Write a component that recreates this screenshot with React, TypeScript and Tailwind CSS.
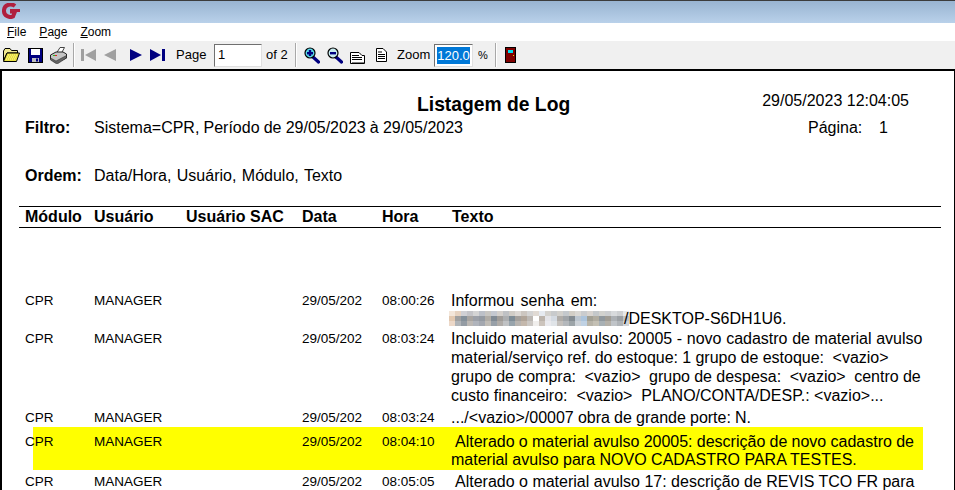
import React from 'react';

const FONT = "font-['Liberation_Sans',Arial,sans-serif]";

// pixelated block that hides the address in the original report
const mosaic = [
  ['#f3e6da', '#e6d2c0', '#d0d0d4', '#c4c4c8', '#d4d4d4', '#bcc0c8', '#c8c6c2', '#c4c8d0', '#d4d0cc', '#bfc1c4', '#d0ccc6', '#dcd8d4', '#ccc6c0', '#d4d4d4', '#e0dad4', '#e6eaf0', '#d4d2ce', '#c8cacc', '#d2d0cc', '#c4c8cc', '#d2cec6', '#dad8d4', '#cacccE', '#d8d4d0', '#c4c8ca', '#d2d2ce', '#cccED0', '#d8dadc', '#ced0d2', '#e6e8ea'],
  ['#e2c8b0', '#a0a0a0', '#84909a', '#a8a4a0', '#9ca0a8', '#949aa2', '#b0aca6', '#808a94', '#a09c98', '#acaeb0', '#7e8c96', '#a4a09c', '#b0a498', '#bcb8b4', '#ffffff', '#bcb4ac', '#e4e4e8', '#d4dae2', '#b0aca8', '#a0a4a8', '#848c92', '#bcc6d0', '#acc4dc', '#a2a094', '#b0aca0', '#90989e', '#a09c94', '#acb0b4', '#9ca0a4', '#c0c4c8'],
  ['#ecd8c8', '#b0b4b8', '#949ca4', '#bcb8b4', '#b0b4bc', '#a4a8b0', '#c0bcb6', '#98a0a8', '#b0aca8', '#c0c2c4', '#98a4ac', '#b8b4b0', '#c4b8ac', '#ccc8c4', '#f0eeec', '#ccc4bc', '#eaeaee', '#e0e4e8', '#c4c0bc', '#b4b8bc', '#9ca4a8', '#ccd2d8', '#c0d2e4', '#b8b4a8', '#c4c0b4', '#a8b0b4', '#b4b0a8', '#c0c4c8', '#b0b4b8', '#d0d4d8'],
];

const FolderIcon = () => (
  <svg width="17" height="14" viewBox="0 0 17 14">
    <path d="M0.500 3 L2 0.500 H7 L8.500 2.500 H14.500 V5 H4 L0.500 12.500 Z" fill="#f0e890" stroke="#000" />
    <path d="M0.500 13.500 L4 5 H16.500 L13.500 13.500 Z" fill="#e8e040" stroke="#000" />
    <path d="M5 7 H14 M4 9 H13 M3 11 H12" stroke="#fff8a0" strokeDasharray="1 1" />
  </svg>
);

const SaveIcon = () => (
  <svg width="15" height="15" viewBox="0 0 15 15">
    <rect x="0.500" y="0.500" width="14" height="14" fill="#000080" stroke="#000" />
    <rect x="3" y="1" width="9" height="6" fill="#fff" />
    <rect x="4" y="10" width="7" height="4" fill="#c0c0c0" />
    <rect x="8" y="10.500" width="2" height="3" fill="#000080" />
  </svg>
);

const PrintIcon = () => (
  <svg width="17" height="17" viewBox="0 0 17 17">
    <path d="M6 7 L10 0.500 H14.500 L11 7 Z" fill="#fff" stroke="#444" />
    <path d="M0.500 8 L6 5 H13 L16.500 7 V11 L8 15 H5 L0.500 12 Z" fill="#c4c4c4" stroke="#222" />
    <path d="M0.500 11 L6 14 L16.500 8.500 V11 L8 16.500 H6 L0.500 13 Z" fill="#666" stroke="#222" strokeWidth="0.500" />
    <rect x="3" y="8" width="2" height="1" fill="#20c020" />
    <rect x="5" y="8" width="2" height="1" fill="#e02020" />
  </svg>
);

const FirstIcon = ({ color }: { color: string }) => (
  <svg width="15" height="12" viewBox="0 0 15 12">
    <rect x="0" y="0" width="3" height="12" fill={color} />
    <path d="M15 0 V12 L4 6 Z" fill={color} />
  </svg>
);

const PrevIcon = ({ color }: { color: string }) => (
  <svg width="12" height="12" viewBox="0 0 12 12">
    <path d="M12 0 V12 L0 6 Z" fill={color} />
  </svg>
);

const NextIcon = ({ color }: { color: string }) => (
  <svg width="12" height="12" viewBox="0 0 12 12">
    <path d="M0 0 V12 L12 6 Z" fill={color} />
  </svg>
);

const LastIcon = ({ color }: { color: string }) => (
  <svg width="15" height="12" viewBox="0 0 15 12">
    <path d="M0 0 V12 L11 6 Z" fill={color} />
    <rect x="12" y="0" width="3" height="12" fill={color} />
  </svg>
);

const ZoomIcon = ({ plus }: { plus: boolean }) => (
  <svg width="16" height="17" viewBox="0 0 16 17">
    <path d="M9 10 L14.500 15" stroke="#000080" strokeWidth="3.200" strokeLinecap="round" />
    <circle cx="6" cy="6" r="5" fill={plus ? '#58d8e8' : '#c8ecf0'} stroke="#000" strokeWidth="1.200" />
    <rect x="3" y="5" width="6" height="2.400" fill="#000080" />
    {plus && <rect x="4.800" y="3" width="2.400" height="6" fill="#000080" />}
  </svg>
);

const TwoPageIcon = () => (
  <svg width="15" height="13" viewBox="0 0 15 13">
    <path d="M0.500 1.500 H9 L12 4.500 H14.500 V12.500 H0.500 Z" fill="#fff" stroke="#000" />
    <path d="M2 4.500 H9 M2 6.500 H12 M2 8.500 H12 M2 12 H14" stroke="#000" />
  </svg>
);

const PageIcon = () => (
  <svg width="11" height="14" viewBox="0 0 11 14">
    <path d="M0.500 0.500 H7 L10.500 4 V13.500 H0.500 Z" fill="#fff" stroke="#000" />
    <path d="M2 4 H6 M2 6.500 H9 M2 8.500 H9 M2 10.500 H9" stroke="#000" />
  </svg>
);

const DoorIcon = () => (
  <svg width="11" height="16" viewBox="0 0 11 16">
    <rect x="0.500" y="0.500" width="10" height="15" fill="#800000" stroke="#000" />
    <rect x="3" y="3" width="5" height="3" fill="#00e0f0" />
    <rect x="8" y="8" width="1" height="1" fill="#e8e000" />
  </svg>
);

const Logo = () => (
  <svg width="18" height="16" viewBox="0 0 18 16">
    <path d="M13 3 C9 0 2.500 1.500 2 7 C1.500 13 7.500 15 11 13.500 L13 8.500 H8" fill="none" stroke="#b0203e" strokeWidth="4" />
    <path d="M8 7.500 H18" stroke="#b0203e" strokeWidth="3" />
  </svg>
);

const Sep = () => <div className="w-0.5 h-[24px] bg-[#a8a8a8] border-r border-white" />;

const Row = ({ date, time, lines, highlight }: { date: string; time: string; lines: React.ReactNode; highlight?: boolean }) => (
  <div className="relative flex text-[13.500px] leading-[19px] text-black">
    {highlight && <div className="absolute left-[33px] right-[31px] top-[-5px] h-[43px] bg-[#ffff00]" />}
    <div className="relative ml-[25px] w-[69px]">CPR</div>
    <div className="relative w-[208px]">MANAGER</div>
    <div className="relative w-[80px]">{date}</div>
    <div className="relative w-[69px]">{time}</div>
    <div className="relative flex-1 text-[16px]">{lines}</div>
  </div>
);

export default function App() {
  return (
    <div className={`${FONT} w-[955px] h-[490px] overflow-hidden flex flex-col bg-white`}>
      <div className="h-[23px] border-t border-[#3c3c3c] bg-gradient-to-b from-[#99b4d1] to-[#b9d1ea] pl-[2px] pt-[2px]">
        <Logo />
      </div>
      <div className="h-[18px] flex items-center gap-[13px] pl-[7px] text-[12px] text-black">
        <span><u>F</u>ile</span>
        <span><u>P</u>age</span>
        <span><u>Z</u>oom</span>
      </div>
      <div className="h-[28px] bg-[#f0f0f0] flex items-center pl-[3px] text-[13px] text-black">
        <FolderIcon />
        <div className="ml-[8px]"><SaveIcon /></div>
        <div className="ml-[7px]"><PrintIcon /></div>
        <div className="ml-[6px]"><Sep /></div>
        <div className="ml-[6px]"><FirstIcon color="#a0a0a0" /></div>
        <div className="ml-[8px]"><PrevIcon color="#a0a0a0" /></div>
        <div className="ml-[14px]"><NextIcon color="#000080" /></div>
        <div className="ml-[8px]"><LastIcon color="#000080" /></div>
        <span className="ml-[11px] w-[29px]">Page</span>
        <div className="ml-[9px] w-[48px] h-[23px] bg-white border border-[#707070] border-r-[#e0e0e0] border-b-[#e0e0e0] pl-[3px] leading-[20px] text-[13px]">1</div>
        <span className="ml-[4px] w-[22px]">of 2</span>
        <div className="ml-[7px]"><Sep /></div>
        <div className="ml-[7px]"><ZoomIcon plus /></div>
        <div className="ml-[7px]"><ZoomIcon plus={false} /></div>
        <div className="ml-[7px] mt-[4px]"><TwoPageIcon /></div>
        <div className="ml-[11px]"><PageIcon /></div>
        <span className="ml-[10px] w-[32px]">Zoom</span>
        <div className="ml-[5px] w-[39px] h-[23px] bg-white border border-[#707070] border-r-[#e0e0e0] border-b-[#e0e0e0] p-[2px]">
          <div className="w-[33px] h-[17px] bg-[#0078d7] text-white leading-[17px] text-center">120.0</div>
        </div>
        <span className="ml-[5px] w-[10px] text-[11px]">%</span>
        <div className="ml-[7px]"><Sep /></div>
        <div className="ml-[8px]"><DoorIcon /></div>
      </div>
      <div className="flex-1 border-t-2 border-l-2 border-r border-black overflow-hidden">
        <div className="flex h-[47px]">
          <div className="w-[415px]" />
          <div className="pt-[23px] text-[19.300px] leading-[22px] font-bold text-black">Listagem de Log</div>
          <div className="ml-[192px] pt-[20px] text-[16px] leading-[19px] text-black">29/05/2023 12:04:05</div>
        </div>
        <div className="flex text-[16px] leading-[19px] text-black">
          <div className="ml-[23px] w-[69px] font-bold">Filtro:</div>
          <div className="w-[714px] [word-spacing:-0.3px]">Sistema=CPR, Período de 29/05/2023 à 29/05/2023</div>
          <div className="w-[71px]">Página:</div>
          <div>1</div>
        </div>
        <div className="flex mt-[29px] text-[16px] leading-[19px] text-black">
          <div className="ml-[23px] w-[69px] font-bold">Ordem:</div>
          <div className="[word-spacing:1px]">Data/Hora, Usuário, Módulo, Texto</div>
        </div>
        <div className="mt-[21px] ml-[17px] mr-[13px] h-[22px] border-t border-b border-black flex items-center text-[16px] font-bold text-black">
          <div className="ml-[6px] w-[69px]">Módulo</div>
          <div className="w-[92px]">Usuário</div>
          <div className="w-[116px]">Usuário SAC</div>
          <div className="w-[80px]">Data</div>
          <div className="w-[70px]">Hora</div>
          <div>Texto</div>
        </div>
        <div className="-ml-[2px] mt-[63px] flex flex-col">
          <Row
            date="29/05/202"
            time="08:00:26"
            lines={
              <>
                <div className="[word-spacing:2px]">Informou senha em:</div>
                <div className="-mt-[1px] flex items-center">
                  <div className="-ml-[2px] flex flex-col">
                    {mosaic.map((row, r) => (
                      <div key={r} className="flex">
                        {row.map((c, i) => (
                          <div key={i} className="w-[6px] h-[5px]" style={{ backgroundColor: c }} />
                        ))}
                      </div>
                    ))}
                  </div>
                  <span className="-ml-[5px]">/DESKTOP-S6DH1U6.</span>
                </div>
              </>
            }
          />
          <div className="h-[1px]" />
          <Row
            date="29/05/202"
            time="08:03:24"
            lines={
              <>
                <div className="[word-spacing:0.2px]">Incluido material avulso: 20005 - novo cadastro de material avulso</div>
                <div className="[word-spacing:-0.2px]">material/serviço ref. do estoque: 1 grupo de estoque:&nbsp; &lt;vazio&gt;</div>
                <div className="[word-spacing:-0.2px]">grupo de compra:&nbsp; &lt;vazio&gt;&nbsp; grupo de despesa:&nbsp; &lt;vazio&gt;&nbsp; centro de</div>
                <div>custo financeiro:&nbsp; &lt;vazio&gt;&nbsp; PLANO/CONTA/DESP.: &lt;vazio&gt;...</div>
              </>
            }
          />
          <div className="h-[3px]" />
          <Row date="29/05/202" time="08:03:24" lines={<div className="[word-spacing:-0.3px]">.../&lt;vazio&gt;/00007 obra de grande porte: N.</div>} />
          <div className="h-[5px]" />
          <Row
            highlight
            date="29/05/202"
            time="08:04:10"
            lines={
              <>
                <div className="pl-[4px] [word-spacing:-0.2px]">Alterado o material avulso 20005: descrição de novo cadastro de</div>
                <div className="-mt-[1px]">material avulso para NOVO CADASTRO PARA TESTES.</div>
              </>
            }
          />
          <div className="h-[3px]" />
          <Row
            date="29/05/202"
            time="08:05:05"
            lines={<div className="pl-[4px]">Alterado o material avulso 17: descrição de REVIS TCO FR para</div>}
          />
        </div>
      </div>
    </div>
  );
}
